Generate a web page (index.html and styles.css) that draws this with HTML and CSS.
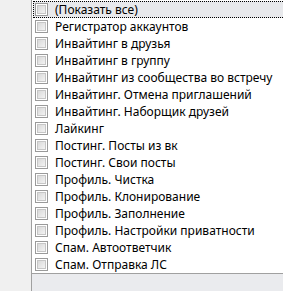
FILE: index.html
```html
<!DOCTYPE html>
<html lang="ru">
<head>
    <meta charset="UTF-8">
    <title>Фильтр</title>
    <link rel="stylesheet" href="styles.css">
</head>
<body>
    <div class="panel">
        <div class="gutter"></div>
        <div class="main">
            <ul class="check-list">
                <li class="item current"><span class="box"></span>(Показать все)</li>
                <li class="item"><span class="box"></span>Регистратор аккаунтов</li>
                <li class="item"><span class="box"></span>Инвайтинг в друзья</li>
                <li class="item"><span class="box"></span>Инвайтинг в группу</li>
                <li class="item"><span class="box"></span>Инвайтинг из сообщества во встречу</li>
                <li class="item"><span class="box"></span>Инвайтинг. Отмена приглашений</li>
                <li class="item"><span class="box"></span>Инвайтинг. Наборщик друзей</li>
                <li class="item"><span class="box"></span>Лайкинг</li>
                <li class="item"><span class="box"></span>Постинг. Посты из вк</li>
                <li class="item"><span class="box"></span>Постинг. Свои посты</li>
                <li class="item"><span class="box"></span>Профиль. Чистка</li>
                <li class="item"><span class="box"></span>Профиль. Клонирование</li>
                <li class="item"><span class="box"></span>Профиль. Заполнение</li>
                <li class="item"><span class="box"></span>Профиль. Настройки приватности</li>
                <li class="item"><span class="box"></span>Спам. Автоответчик</li>
                <li class="item"><span class="box"></span>Спам. Отправка ЛС</li>
            </ul>
            <div class="footer"></div>
        </div>
    </div>
</body>
</html>
```

FILE: styles.css
```css
body {
    margin: 0;
    padding: 0;
    font-family: "Noto Sans", "Open Sans", sans-serif;
    font-size: 12px;
    color: #000;
}

.panel {
    display: flex;
    width: 283px;
    height: 291px;
    overflow: hidden;
}

.gutter {
    width: 31px;
    flex: none;
    background-color: #f0f0f0;
    border-right: 1px solid #a0a0a0;
}

.main {
    flex: 1;
    display: flex;
    flex-direction: column;
    background-color: #fff;
    overflow: hidden;
}

.check-list {
    list-style: none;
    margin: 0;
    padding: 1px 0 0 0;
}

.item {
    display: flex;
    align-items: center;
    height: 17px;
    margin-left: 1px;
    margin-right: -4px;
    padding-left: 2px;
    white-space: nowrap;
    box-sizing: border-box;
    line-height: 17px;
}

.item.current {
    background-color: #e8e9ec;
    border: 1px dotted #000;
    padding-left: 1px;
}

/* checkbox drawn with two nested squares */
.box {
    position: relative;
    width: 13px;
    height: 13px;
    flex: none;
    margin-right: 7px;
    box-sizing: border-box;
    border: 1px solid #9a9a9a;
    background-color: #fff;
}

.box::after {
    content: "";
    position: absolute;
    left: 1px;
    top: 1px;
    right: 1px;
    bottom: 1px;
    border: 1px solid #c6c6c6;
    background: linear-gradient(135deg, #d9d9d9, #f3f3f3);
}

.footer {
    flex: 1;
    background-color: #eaebee;
    border-top: 1px solid #a0a0a0;
}
```
